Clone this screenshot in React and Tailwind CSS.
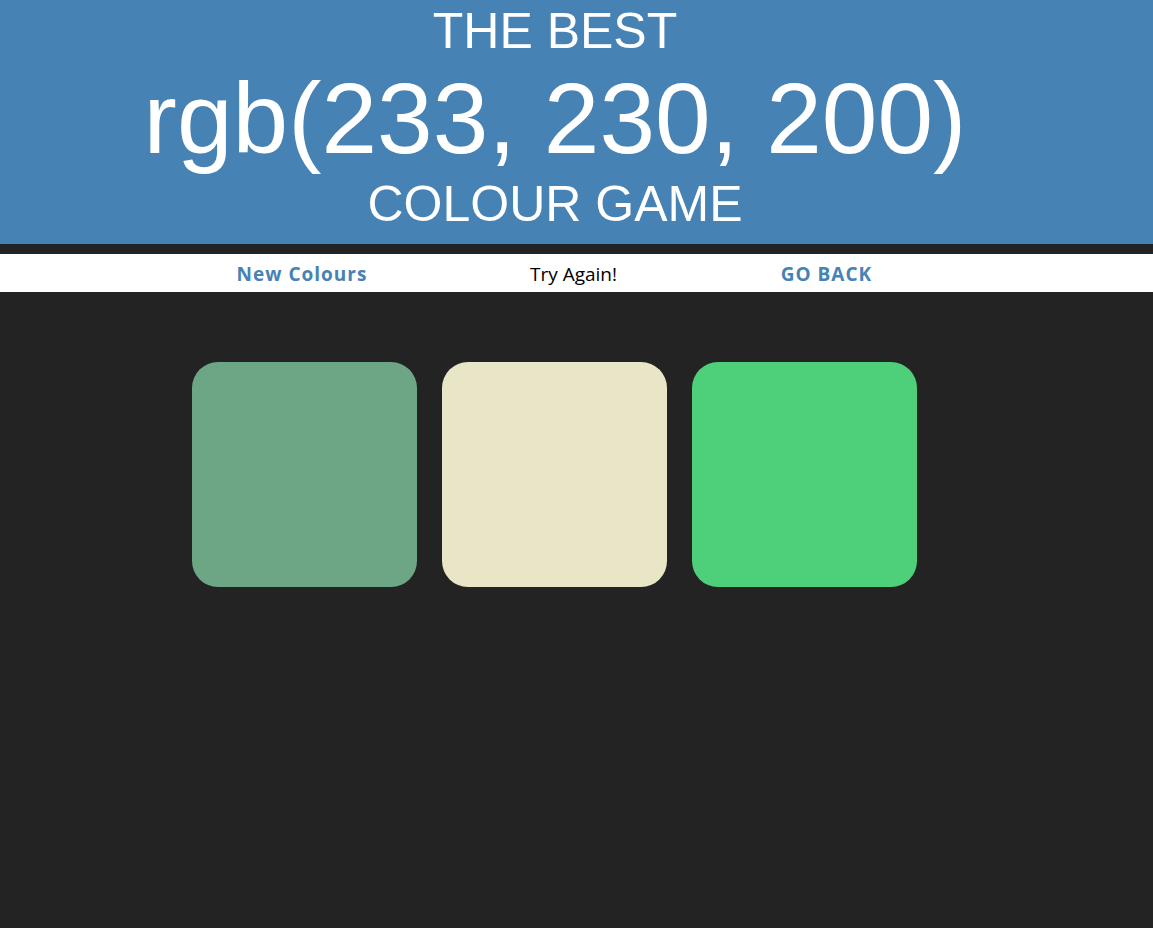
export default function App() {
  const squares = ["#6ca684", "#e9e6c8", "#4ecf7a"];
  return (
    <div className="min-h-[928px] bg-[#232323]">
      <div className="bg-[#4682b4] pr-[43px] pt-[3px] pb-[11px] text-center text-white font-['Liberation_Sans',Arial,sans-serif] font-normal">
        <div className="text-[50px] leading-[57.5px]">THE BEST</div>
        <div className="text-[100px] leading-[115px]">rgb(233, 230, 200)</div>
        <div className="text-[50px] leading-[57.5px]">COLOUR GAME</div>
      </div>
      <div className="h-[10px]" />
      <div className="flex h-[38px] items-center bg-white pl-[212px] pt-[2px] font-['Open_Sans',sans-serif] text-[19px]">
        <div className="w-[180px] text-center font-bold tracking-[1px] text-[#4682b4]">New Colours</div>
        <div className="w-[363px] text-center text-black">Try Again!</div>
        <div className="w-[143px] text-center font-bold tracking-[1px] text-[#4682b4]">GO BACK</div>
      </div>
      <div className="flex justify-center gap-[25px] pr-[44px] pt-[70px]">
        {squares.map((c) => (
          <div key={c} className="h-[225px] w-[225px] rounded-[26px]" style={{ backgroundColor: c }} />
        ))}
      </div>
    </div>
  );
}
